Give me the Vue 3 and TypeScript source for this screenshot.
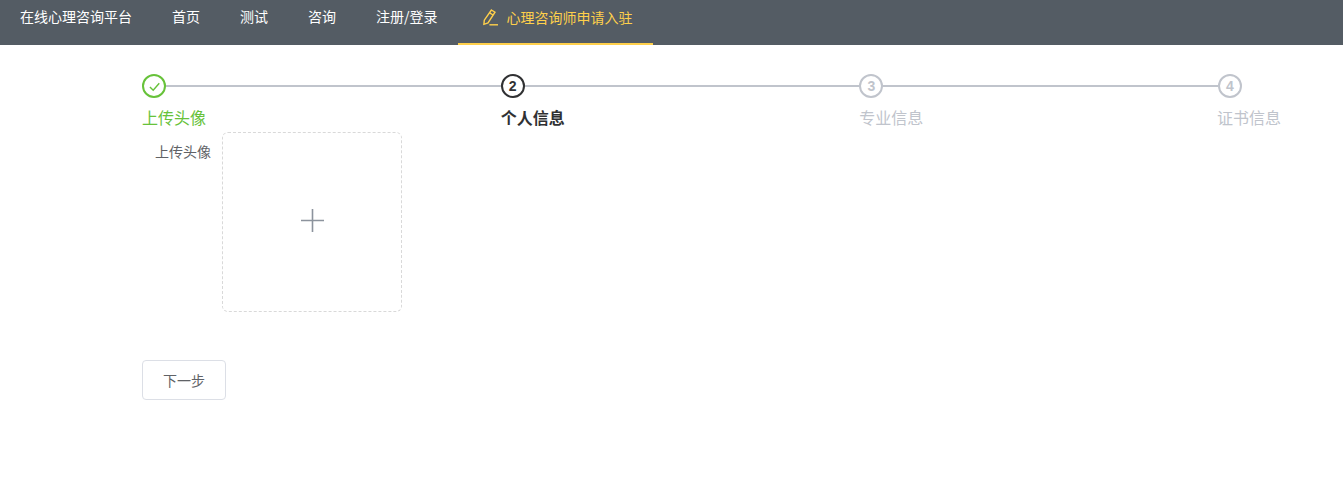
<script setup lang="ts">
interface Step { title: string; state: 'done' | 'current' | 'wait'; num: number }
const navItems: string[] = ['首页', '测试', '咨询', '注册/登录']
const steps: Step[] = [
  { title: '上传头像', state: 'done', num: 1 },
  { title: '个人信息', state: 'current', num: 2 },
  { title: '专业信息', state: 'wait', num: 3 },
  { title: '证书信息', state: 'wait', num: 4 }
]
</script>

<template>
  <div class="page">
    <header class="nav">
      <div class="brand">在线心理咨询平台</div>
      <div v-for="item in navItems" :key="item" class="nav-item">{{ item }}</div>
      <div class="nav-item active">
        <svg class="pen" viewBox="0 0 16 17" width="16" height="17" fill="none" stroke="#ffd04b" stroke-width="1.4">
          <path d="M9.4 1 13 3.2 6 13.8 1.9 15.3 2.3 11.2Z" />
          <path d="M7.6 3.8 11.1 6" />
          <path d="M7.4 15.8H16" />
        </svg>
        <span>心理咨询师申请入驻</span>
      </div>
    </header>

    <main class="content">
      <div class="steps">
        <div v-for="(s, i) in steps" :key="s.num" class="step" :class="[s.state, { last: i === steps.length - 1 }]">
          <div class="head">
            <div v-if="i < steps.length - 1" class="line"></div>
            <div class="circle">
              <svg v-if="s.state === 'done'" viewBox="0 0 12 12" width="13" height="13" fill="none" stroke="#67c23a" stroke-width="1.3">
                <path d="M1.8 6.4 4.8 9.4 10.4 3" />
              </svg>
              <span v-else>{{ s.num }}</span>
            </div>
          </div>
          <div class="title">{{ s.title }}</div>
        </div>
      </div>

      <div class="form-row">
        <label class="label">上传头像</label>
        <div class="upload">
          <svg class="plus" viewBox="0 0 23 23" width="23" height="23" fill="none" stroke="#8c939d" stroke-width="1.6">
            <path d="M11.5 0V23M0 11.5H23" />
          </svg>
        </div>
      </div>

      <button class="next" type="button">下一步</button>
    </main>
  </div>
</template>

<style scoped>
.page {
  width: 1343px;
  height: 497px;
  overflow: hidden;
  background: #fff;
  font-family: "Noto Sans CJK SC", "Liberation Sans", sans-serif;
}
.nav {
  display: flex;
  align-items: stretch;
  height: 43px;
  background: #545c64;
  color: #fff;
  font-size: 14px;
  border-bottom: 2px solid #545c64;
}
.brand {
  padding: 0 20px;
  line-height: 32px;
}
.nav-item {
  padding: 0 20px;
  line-height: 33px;
}
.nav-item.active {
  display: flex;
  align-items: center;
  gap: 9px;
  height: 43px;
  padding: 0 20px 0 24px;
  line-height: 20px;
  color: #ffd04b;
  border-bottom: 2px solid #ffd04b;
}
.nav-item.active span {
  margin-top: -9px;
}
.pen {
  flex: none;
  margin-top: -9px;
}
.content {
  padding: 29px 61px 0 142px;
}
.steps {
  display: flex;
  height: 58px;
}
.step {
  flex: 0 0 358.67px;
}
.step.last {
  flex: 0 0 64px;
  margin-left: -1px;
}
.step.last .head {
  margin-left: 1px;
}
.head {
  position: relative;
  height: 24px;
}
.line {
  position: absolute;
  left: 0;
  right: 0;
  top: 11px;
  height: 2px;
  background: #c0c4cc;
}
.circle {
  position: relative;
  box-sizing: border-box;
  display: flex;
  align-items: center;
  justify-content: center;
  width: 24px;
  height: 24px;
  border: 2px solid;
  border-radius: 50%;
  background: #fff;
  font-size: 14px;
  font-weight: 700;
  font-family: "Liberation Sans", sans-serif;
}
.title {
  font-size: 16px;
  line-height: 38px;
  white-space: nowrap;
}
.done { color: #67c23a; }
.current { color: #303133; }
.current .title { font-weight: 700; }
.wait { color: #c0c4cc; }
.form-row {
  display: flex;
  align-items: flex-start;
}
.label {
  box-sizing: border-box;
  width: 80px;
  padding-right: 11px;
  text-align: right;
  font-size: 14px;
  line-height: 38px;
  color: #606266;
}
.upload {
  box-sizing: border-box;
  display: flex;
  align-items: center;
  justify-content: center;
  width: 180px;
  height: 180px;
  border: 1px dashed #d9d9d9;
  border-radius: 6px;
}
.plus {
  margin: -3px 0 0 1px;
}
.next {
  display: block;
  box-sizing: border-box;
  width: 84px;
  height: 40px;
  margin-top: 48px;
  padding: 0;
  background: #fff;
  border: 1px solid #dcdfe6;
  border-radius: 4px;
  color: #606266;
  font-family: inherit;
  font-size: 14px;
}
</style>

<style>
html, body { margin: 0; background: #fff; }
</style>
